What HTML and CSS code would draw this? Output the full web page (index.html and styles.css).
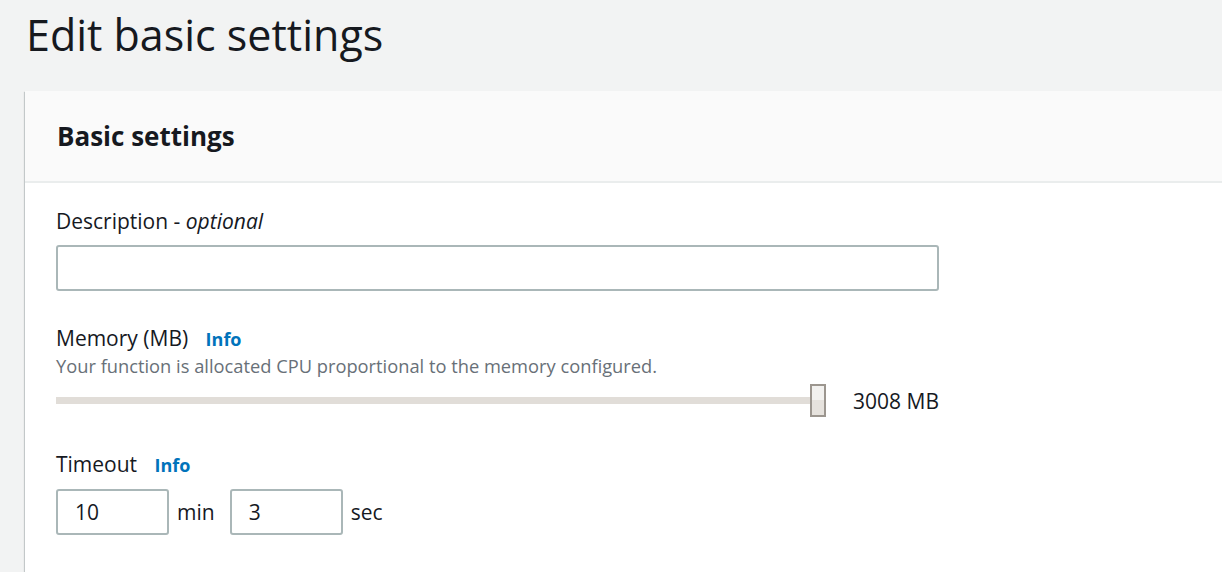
FILE: index.html
```html
<!DOCTYPE html>
<html lang="en">
  <head>
    <meta charset="UTF-8" />
    <meta name="viewport" content="width=device-width, initial-scale=1.0" />
    <title>Edit basic settings</title>
    <link rel="stylesheet" href="styles.css">
  </head>
  <body>
    <div class="page">
      <h1 class="page_title">Edit basic settings</h1>

      <div class="card">
        <div class="card_header">
          <h2>Basic settings</h2>
        </div>
        <div class="card_body">
          <div class="field">
            <label class="field_label">Description - <i>optional</i></label>
            <input class="text_input wide" type="text" />
          </div>

          <div class="field">
            <div class="field_label">Memory (MB) <a class="info" href="#">Info</a></div>
            <div class="field_desc">Your function is allocated CPU proportional to the memory configured.</div>
            <div class="slider_row">
              <div class="slider">
                <div class="slider_track"></div>
                <div class="slider_thumb"></div>
              </div>
              <span class="slider_value">3008 MB</span>
            </div>
          </div>

          <div class="field">
            <div class="field_label">Timeout <a class="info" href="#">Info</a></div>
            <div class="timeout_row">
              <input class="text_input short" type="text" value="10" />
              <span class="unit">min</span>
              <input class="text_input short" type="text" value="3" />
              <span class="unit">sec</span>
            </div>
          </div>
        </div>
      </div>
    </div>
  </body>
</html>
```

FILE: styles.css
```css
body {
  margin: 0;
  background-color: #f2f3f3;
  font-family: "Open Sans", "Noto Sans", sans-serif;
  color: #16191f;
  overflow: hidden;
}
.page {
  padding-left: 25px;
}
.page_title {
  margin: 5px 0 26px 1px;
  font-size: 43px;
  line-height: 60px;
  font-weight: 400;
}
.card {
  width: 1400px;
  background-color: #ffffff;
  box-shadow: 0 1px 1px 0 rgba(0, 28, 36, 0.3), -1px 1px 1px 0 rgba(0, 28, 36, 0.15);
}
.card_header {
  height: 90px;
  padding-left: 32px;
  display: flex;
  align-items: center;
  background-color: #fafafa;
  border-bottom: 2px solid #eaeded;
}
.card_header h2 {
  margin: 0;
  font-size: 26px;
  font-weight: 700;
}
.card_body {
  padding: 23px 31px 40px;
}
.field {
  margin-bottom: 32px;
}
.field_label {
  display: block;
  font-size: 21px;
  line-height: 30px;
}
.info {
  margin-left: 12px;
  font-size: 18px;
  font-weight: 700;
  color: #0073bb;
  text-decoration: none;
}
.field_desc {
  font-size: 18.3px;
  line-height: 24px;
  color: #687078;
}
.text_input {
  display: block;
  box-sizing: border-box;
  height: 46px;
  margin-top: 9px;
  border: 2px solid #aab7b8;
  border-radius: 3px;
  padding: 0 17px;
  font-family: inherit;
  font-size: 21px;
  color: #16191f;
}
.wide {
  width: 883px;
}
.short {
  width: 113px;
  margin-top: 0;
}
.slider_row {
  margin-top: 6px;
  display: flex;
  align-items: center;
  width: 883px;
}
.slider {
  position: relative;
  width: 770px;
  height: 33px;
  display: flex;
  align-items: center;
}
.slider_track {
  width: 100%;
  height: 7px;
  background-color: #e1ddd8;
}
.slider_thumb {
  position: absolute;
  right: 0;
  top: 0;
  width: 16px;
  height: 33px;
  box-sizing: border-box;
  border: 2px solid #9c968f;
  background: linear-gradient(#f2f1ef 50%, #e6e2dd 50%);
}
.slider_value {
  margin-left: auto;
  font-size: 21px;
}
.timeout_row {
  margin-top: 9px;
  display: flex;
  align-items: center;
}
.unit {
  margin: 0 15px 0 8px;
  font-size: 21px;
}
```
